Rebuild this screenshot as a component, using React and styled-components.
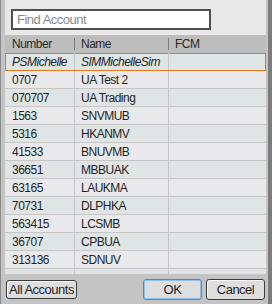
import React from "react";
import styled, { createGlobalStyle } from "styled-components";

const accounts = [
  { number: "PSMichelle", name: "SIMMichelleSim", fcm: "", sim: true },
  { number: "0707", name: "UA Test 2", fcm: "" },
  { number: "070707", name: "UA Trading", fcm: "" },
  { number: "1563", name: "SNVMUB", fcm: "" },
  { number: "5316", name: "HKANMV", fcm: "" },
  { number: "41533", name: "BNUVMB", fcm: "" },
  { number: "36651", name: "MBBUAK", fcm: "" },
  { number: "63165", name: "LAUKMA", fcm: "" },
  { number: "70731", name: "DLPHKA", fcm: "" },
  { number: "563415", name: "LCSMB", fcm: "" },
  { number: "36707", name: "CPBUA", fcm: "" },
  { number: "313136", name: "SDNUV", fcm: "" },
  { number: "", name: "", fcm: "" },
];

const App = () => {
  return (
    <>
      <GlobalStyle />
      <Frame>
        <SearchBar>
          <SearchInput placeholder="Find Account" />
        </SearchBar>
        <Header>
          <HeadCell>Number</HeadCell>
          <HeadCell>Name</HeadCell>
          <HeadCell>FCM</HeadCell>
        </Header>
        <Body>
          {accounts.map((acc, i) => (
            <Row key={i} $alt={i % 2 === 1} $selected={i === 0}>
              <Cell $italic={acc.sim}>{acc.number}</Cell>
              <Cell $italic={acc.sim}>{acc.name}</Cell>
              <Cell>{acc.fcm}</Cell>
            </Row>
          ))}
        </Body>
        <Footer>
          <Button>All Accounts</Button>
          <Spacer />
          <Button $primary $wide>
            OK
          </Button>
          <Button $wide>Cancel</Button>
        </Footer>
      </Frame>
    </>
  );
};

const GlobalStyle = createGlobalStyle`
  html, body {
    margin: 0;
    padding: 0;
    background: #c4c4c4;
  }
  body {
    font-family: "Liberation Sans", Arial, sans-serif;
    font-size: 12px;
    letter-spacing: -0.5px;
    color: #1e1e1e;
  }
`;

const Frame = styled.div`
  width: 272px;
  height: 304px;
  box-sizing: border-box;
  display: flex;
  flex-direction: column;
  background: #c4c4c4;
  border-left: 1px solid #8a8a8a;
  border-right: 4px solid #7c7c7c;
  padding: 0 2px 0 4px;
  overflow: hidden;
`;

const SearchBar = styled.div`
  height: 35px;
  box-sizing: border-box;
  background: #e8e8e8;
  padding: 9px 0 0 6px;
`;

const SearchInput = styled.input`
  display: block;
  width: 200px;
  height: 21px;
  box-sizing: border-box;
  border: 2px solid #4f4f4f;
  background: #ffffff;
  padding: 0 4px;
  font-family: inherit;
  font-size: 13px;
  letter-spacing: -0.5px;
  outline: none;
  &::placeholder {
    color: #8a8a8a;
  }
`;

const columns = "69px 94px 1fr";

const Header = styled.div`
  display: grid;
  grid-template-columns: ${columns};
  height: 18px;
  background: #bdbdbd;
`;

const HeadCell = styled.div`
  display: flex;
  align-items: center;
  padding-left: 7px;
  color: #2a2a2a;
  position: relative;
  & + &::before {
    content: "";
    position: absolute;
    left: 0;
    top: 3px;
    bottom: 3px;
    width: 1px;
    background: #7e7e7e;
  }
`;

const Body = styled.div`
  height: 221px;
  overflow: hidden;
  background: #e9e9eb;
`;

const Row = styled.div`
  display: grid;
  grid-template-columns: ${columns};
  height: 18px;
  box-sizing: border-box;
  border-bottom: 1px solid ${(p) => (p.$selected ? "#e8781e" : "#c6c6c6")};
  background: ${(p) => (p.$alt ? "#e9e9eb" : "#dfe5e5")};
  box-shadow: ${(p) =>
    p.$selected
      ? "inset 0 1px 0 #e8781e, inset 1px 0 0 #e8781e, inset -1px 0 0 #e8781e"
      : "none"};
`;

const Cell = styled.div`
  display: flex;
  align-items: center;
  padding-left: 7px;
  font-style: ${(p) => (p.$italic ? "italic" : "normal")};
  white-space: nowrap;
  overflow: hidden;
  & + & {
    border-left: 1px solid #c6c6c6;
    padding-left: 6px;
  }
`;

const Footer = styled.div`
  flex: 1;
  display: flex;
  align-items: center;
  gap: 4px;
  padding: 0 1px;
  background: #c4c4c4;
`;

const Spacer = styled.div`
  flex: 1;
`;

const Button = styled.button`
  height: ${(p) => (p.$wide ? "21px" : "19px")};
  width: ${(p) => (p.$wide ? "59px" : "71px")};
  box-sizing: border-box;
  border: 1px solid ${(p) => (p.$primary ? "#3a8fd6" : "#3c3c3c")};
  box-shadow: ${(p) =>
    p.$primary ? "inset 0 0 0 1px #8fc2ea" : "inset 1px 1px 0 #f6f6f6"};
  border-radius: 3px;
  background: #dedede;
  font-family: inherit;
  font-size: 13px;
  letter-spacing: -0.5px;
  color: #1e1e1e;
  padding: 0;
  white-space: nowrap;
  cursor: pointer;
`;

export default App;
